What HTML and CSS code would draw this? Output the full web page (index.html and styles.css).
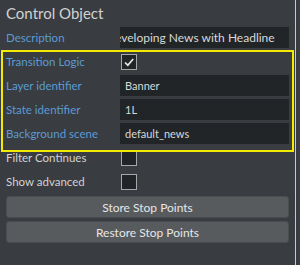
FILE: index.html
```html
<!DOCTYPE html>
<html>
<head>
    <title>Control Object</title>
    <link rel="stylesheet" href="styles.css">
</head>
<body>
    <div class="panel">
        <div class="title">Control Object</div>
        <div class="row">
            <span class="label">Description</span>
            <div class="field scrolled"><span>Developing News with Headline</span></div>
        </div>
        <div class="row">
            <span class="label">Transition Logic</span>
            <span class="check checked">
                <svg width="12" height="12" viewBox="0 0 12 12"><path d="M2 6.5 L4.8 9.2 L10.2 3" fill="none" stroke="#e8e8e8" stroke-width="1.7"/></svg>
            </span>
        </div>
        <div class="row">
            <span class="label">Layer identifier</span>
            <div class="field">Banner</div>
        </div>
        <div class="row">
            <span class="label">State identifier</span>
            <div class="field">1L</div>
        </div>
        <div class="row">
            <span class="label">Background scene</span>
            <div class="field">default_news</div>
        </div>
        <div class="row">
            <span class="label plain">Filter Continues</span>
            <span class="check"></span>
        </div>
        <div class="row">
            <span class="label plain">Show advanced</span>
            <span class="check"></span>
        </div>
        <div class="buttons">
            <button class="btn">Store Stop Points</button>
            <button class="btn">Restore Stop Points</button>
        </div>
        <div class="highlight"></div>
    </div>
    <div class="edge"></div>
</body>
</html>
```

FILE: styles.css
```css
body {
    margin: 0;
    height: 265px;
    display: flex;
    background: #393c40;
    font-family: Lato, "Open Sans", sans-serif;
    overflow: hidden;
}
.panel {
    position: relative;
    width: 295px;
    box-sizing: border-box;
    padding: 3px 6px 0 6px;
    display: flex;
    flex-direction: column;
    gap: 3px;
}
.edge {
    width: 1px;
    background: #c8c8c8;
}
.title {
    font-size: 15px;
    color: #d2d2d2;
    height: 21px;
    line-height: 21px;
}
.row {
    height: 21px;
    display: flex;
    align-items: center;
}
.label {
    width: 114px;
    flex-shrink: 0;
    font-size: 11.5px;
    color: #5b9bd5;
}
.label.plain {
    color: #d2d2d2;
}
.field {
    flex: 1;
    height: 21px;
    line-height: 21px;
    box-sizing: border-box;
    padding: 0 5px;
    background: #222528;
    color: #d8d8d8;
    font-size: 11px;
    white-space: nowrap;
    overflow: hidden;
}
.field.scrolled {
    padding: 0;
    font-size: 12px;
}
.field.scrolled span {
    margin-left: -14px;
}
.check {
    margin-left: 1px;
    width: 16px;
    height: 16px;
    box-sizing: border-box;
    border: 1px solid #a8a8a8;
    background: #222528;
    display: flex;
    align-items: center;
    justify-content: center;
}
.buttons {
    display: flex;
    flex-direction: column;
    gap: 3px;
    margin-top: 1px;
}
.btn {
    height: 22px;
    padding: 0;
    border: 1px solid #4a4d50;
    border-radius: 3px;
    background: #585b5e;
    color: #e6e6e6;
    font-family: Lato, "Open Sans", sans-serif;
    font-size: 12px;
}
.highlight {
    position: absolute;
    left: 1px;
    top: 50px;
    width: 293px;
    height: 102px;
    box-sizing: border-box;
    border: 2px solid #f2ea00;
}
```
